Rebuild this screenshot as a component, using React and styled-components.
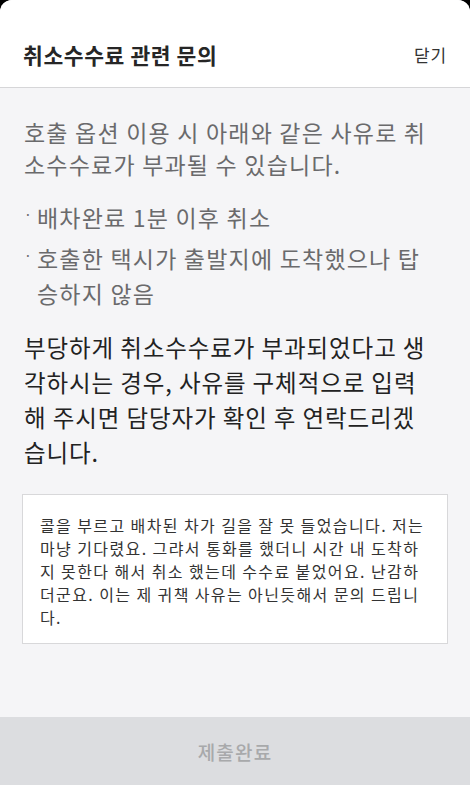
import React from 'react'
import styled, { createGlobalStyle } from 'styled-components'

const GlobalStyle = createGlobalStyle`
  html, body {
    margin: 0;
    padding: 0;
    background: #000;
  }
  * {
    box-sizing: border-box;
  }
  body {
    font-family: "Noto Sans CJK KR", "Noto Sans", sans-serif;
  }
`

const Sheet = styled.div`
  width: 470px;
  height: 785px;
  display: flex;
  flex-direction: column;
  border-radius: 12px 12px 0 0;
  overflow: hidden;
  background: #f5f5f7;
`

const Header = styled.header`
  height: 88px;
  padding: 22px 23px 0 23px;
  display: flex;
  align-items: center;
  justify-content: space-between;
  background: #fff;
  border-bottom: 1px solid #d6d6d8;
`

const Title = styled.h1`
  margin: 0;
  font-size: 21.5px;
  font-weight: 700;
  color: #262626;
  letter-spacing: 0.6px;
`

const CloseButton = styled.button`
  border: 0;
  padding: 0;
  background: none;
  font-family: inherit;
  font-size: 17px;
  letter-spacing: 0.8px;
  color: #333;
`

const Body = styled.main`
  flex: 1;
  padding: 28px 22px 0;
`

const Copy = styled.section`
  padding: 0 12px 0 2px;
  letter-spacing: 1.2px;
`

const Notice = styled.p`
  margin: 0;
  font-size: 23px;
  line-height: 32px;
  color: #6a6a6c;
`

const ReasonList = styled.ul`
  list-style: none;
  margin: 20px 0 0;
  padding: 0;
  display: flex;
  flex-direction: column;
  gap: 6px;
`

const Reason = styled.li`
  display: flex;
  font-size: 23px;
  line-height: 35px;
  color: #6a6a6c;
`

const Dot = styled.span`
  width: 13px;
  flex-shrink: 0;
  font-size: 14px;
  line-height: 28px;
`

const Guide = styled.p`
  margin: 19px 0 0;
  font-size: 23.5px;
  line-height: 35px;
  letter-spacing: 0.9px;
  color: #222;
`

const InquiryBox = styled.div`
  margin-top: 24px;
  height: 150px;
  padding: 19px 15px 19px 17px;
  background: #fff;
  border: 1px solid #d8d8da;
  font-size: 16px;
  line-height: 23px;
  letter-spacing: 1.4px;
  color: #333;
`

const SubmitButton = styled.button`
  height: 68px;
  width: 100%;
  border: 0;
  background: #dcdde0;
  color: #a8a9ab;
  font-family: inherit;
  font-size: 19px;
  font-weight: 500;
  letter-spacing: 1.2px;
`

const reasons = [
  '배차완료 1분 이후 취소',
  '호출한 택시가 출발지에 도착했으나 탑승하지 않음',
]

export default function App() {
  return (
    <>
      <GlobalStyle />
      <Sheet>
        <Header>
          <Title>취소수수료 관련 문의</Title>
          <CloseButton>닫기</CloseButton>
        </Header>
        <Body>
          <Copy>
            <Notice>호출 옵션 이용 시 아래와 같은 사유로 취소수수료가 부과될 수 있습니다.</Notice>
            <ReasonList>
              {reasons.map((r) => (
                <Reason key={r}>
                  <Dot>·</Dot>
                  <span>{r}</span>
                </Reason>
              ))}
            </ReasonList>
            <Guide>
              부당하게 취소수수료가 부과되었다고 생각하시는 경우, 사유를 구체적으로 입력해 주시면 담당자가 확인 후 연락드리겠습니다.
            </Guide>
          </Copy>
          <InquiryBox>
            콜을 부르고 배차된 차가 길을 잘 못 들었습니다. 저는 마냥 기다렸요. 그랴서 통화를 했더니 시간 내 도착하지 못한다 해서 취소 했는데 수수료 붙었어요. 난감하더군요. 이는 제 귀책 사유는 아닌듯해서 문의 드립니다.
          </InquiryBox>
        </Body>
        <SubmitButton disabled>제출완료</SubmitButton>
      </Sheet>
    </>
  )
}
